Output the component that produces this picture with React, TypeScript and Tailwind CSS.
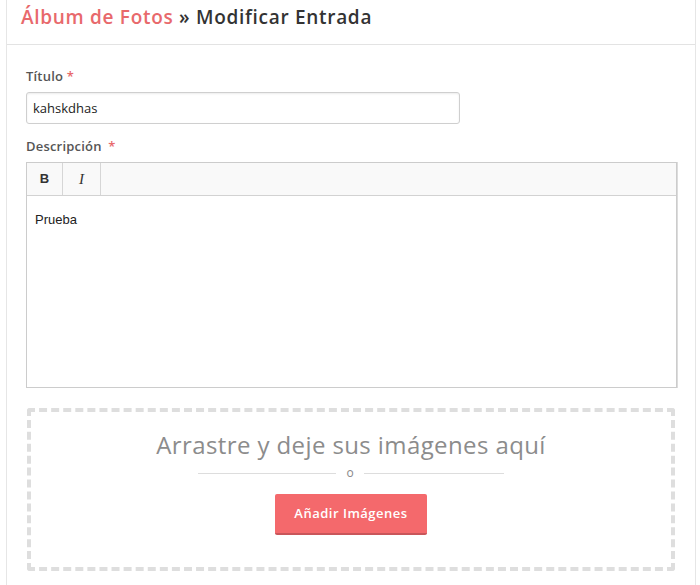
export default function App() {
  const font = { fontFamily: '"Open Sans", "Noto Sans", sans-serif' }

  return (
    <div className="w-[700px] h-[585px] bg-white overflow-hidden" style={font}>
      <div className="ml-[6px] w-[690px] h-full border-x border-[#e6e6e6]">

        {/* Header */}
        <div className="h-[45px] border-b border-[#e3e3e3] pl-[14px] pt-[3px]">
          <h1 className="text-[19px] font-semibold leading-[28px] tracking-[0.7px] text-[#333]">
            <span className="text-[#e8696c]">Álbum de Fotos</span> » Modificar Entrada
          </h1>
        </div>

        <div className="pl-[19px] pr-[19px] pt-[21px]">
          {/* Title field */}
          <label className="block text-[13px] font-semibold tracking-[0.2px] text-[#555] leading-[20px]">
            Título <span className="text-[#e8696c]">*</span>
          </label>
          <input
            defaultValue="kahskdhas"
            className="mt-[6px] w-[434px] h-[32px] px-[6px] text-[13px] text-[#222] border border-[#cfcfcf] rounded-[3px] shadow-[inset_0_1px_2px_rgba(0,0,0,0.08)] outline-none"
            style={font}
          />

          {/* Description */}
          <label className="block mt-[12px] text-[13px] font-semibold tracking-[0.2px] text-[#555] leading-[20px]">
            Descripción <span className="ml-[3px] text-[#e8696c]">*</span>
          </label>
          <div className="mt-[6px] w-[651px] border border-[#cccccc] shadow-[1px_0_0_#dcdcdc]">
            <div className="flex h-[33px] bg-[#f9f9f9] border-b border-[#d2d2d2]">
              <button className="w-[36px] border-r border-[#d6d6d6] text-[13px] font-bold text-[#333]" style={{ fontFamily: '"Liberation Sans", Arial, sans-serif' }}>
                B
              </button>
              <button className="w-[38px] border-r border-[#d6d6d6] text-[15px] italic text-[#333]" style={{ fontFamily: '"Liberation Serif", "Times New Roman", serif' }}>
                I
              </button>
            </div>
            <div className="h-[191px] px-[8px] pt-[14px] text-[13px] text-[#222]" style={{ fontFamily: '"Liberation Sans", Arial, sans-serif' }}>
              Prueba
            </div>
          </div>

          {/* Drop zone */}
          <div className="mt-[20px] ml-[1px] w-[648px] h-[163px] border-[4px] border-dashed border-[#dedede] rounded-[3px] flex flex-col items-center pt-[17px]">
            <p className="text-[24px] leading-[32px] text-[#8c8c8c] tracking-[0.4px]">
              Arrastre y deje sus imágenes aquí
            </p>
            <div className="mt-[6px] flex items-center gap-[10px]">
              <span className="w-[138px] h-px bg-[#dddddd]" />
              <span className="text-[12px] leading-[12px] text-[#888]">o</span>
              <span className="w-[140px] h-px bg-[#dddddd]" />
            </div>
            <button className="mt-[15px] w-[152px] h-[41px] rounded-[2px] bg-[#f4696c] border-b-2 border-[#c9565a] text-[13px] font-semibold tracking-[0.5px] text-white">
              Añadir Imágenes
            </button>
          </div>
        </div>
      </div>
    </div>
  )
}
